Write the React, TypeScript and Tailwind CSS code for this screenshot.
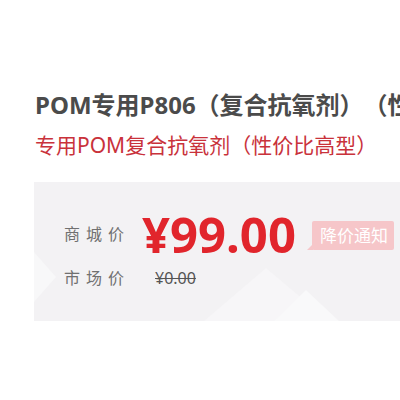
import React from "react";

const font = { fontFamily: '"Noto Sans", "Noto Sans CJK SC", sans-serif' };

export default function App() {
  return (
    <div className="w-[400px] h-[400px] bg-white overflow-hidden" style={font}>
      <div className="pt-[89px] pl-[35px] whitespace-nowrap [text-spacing-trim:space-all]">
        <h1 className="text-[24px] leading-[32px] font-bold text-[#4b4b4b]">
          POM专用P806（复合抗氧剂）（性价比高型）
        </h1>
        <p className="mt-[10px] text-[21px] leading-[28px] text-[#c9323b]">
          专用POM复合抗氧剂（性价比高型）
        </p>
      </div>
      <div className="mt-[23px] ml-[34px] h-[139px] bg-[#f3f2f4] relative overflow-hidden">
        {/* faint background shapes */}
        <svg className="absolute inset-0" width="366" height="139" viewBox="0 0 366 139">
          <polygon points="0,70 22,95 0,120" fill="#f8f8f9" />
          <polygon points="170,139 232,86 295,139" fill="#f7f6f8" />
          <polygon points="240,139 272,108 305,139" fill="#f9f9fa" />
        </svg>
        <div className="relative flex items-center pt-[27px] pl-[30px]">
          <span className="text-[16px] tracking-[6px] text-[#707070]">商城价</span>
          <span className="ml-[12px] text-[49px] leading-[50px] font-bold text-[#e1252c]">
            ¥99.00
          </span>
          <span className="relative ml-[16px] mt-[2px] bg-[#f6c6c9] text-white text-[17px] leading-[29px] pl-[8px] pr-[6px] rounded-[2px]">
            降价通知
            <span className="absolute left-[-5px] bottom-0 w-0 h-0 border-t-[6px] border-t-transparent border-r-[6px] border-r-[#f6c6c9]" />
          </span>
        </div>
        <div className="relative flex items-center mt-[7px] pl-[30px]">
          <span className="text-[16px] tracking-[6px] text-[#707070]">市场价</span>
          <span className="ml-[25px] text-[16px] text-[#555] line-through">¥0.00</span>
        </div>
      </div>
    </div>
  );
}
